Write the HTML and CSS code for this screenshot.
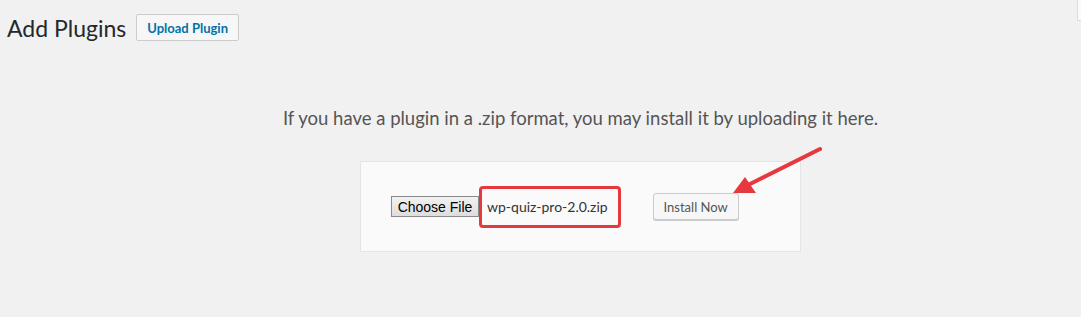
FILE: index.html
```html
<!DOCTYPE html>
<html lang="en">
<head>
<meta charset="UTF-8">
<title>Add Plugins</title>
<link rel="stylesheet" href="styles.css">
</head>
<body>

<div class="help-tab"></div>

<div class="wrap">
    <div class="title-row">
        <h1>Add Plugins</h1>
        <button class="page-title-action">Upload Plugin</button>
    </div>

    <div class="upload-plugin">
        <p class="install-help">If you have a plugin in a .zip format, you may install it by uploading it here.</p>
        <form class="upload-form">
            <button type="button" class="choose-btn">Choose File</button>
            <span class="file-name">wp-quiz-pro-2.0.zip</span>
            <button type="button" class="install-btn">Install Now</button>
        </form>
    </div>
</div>

<svg class="arrow" width="1081" height="317" viewBox="0 0 1081 317">
    <line x1="820" y1="149" x2="748" y2="185" stroke="#e8383f" stroke-width="4" stroke-linecap="round"/>
    <polygon points="733,193 745,177 756,193" fill="#e8383f"/>
</svg>

</body>
</html>
```

FILE: styles.css
```css
body { margin:0; background:#f1f1f1; font-family: Lato, "Open Sans", sans-serif; color:#23282d; }

.help-tab { position:absolute; top:0; right:0; width:3px; height:20px; background:#fafafa; border-left:1px solid #ddd; border-bottom:1px solid #ddd; }

.wrap { padding: 0 0 0 7px; }

.title-row { display:flex; align-items:center; padding-top:14px; }
.title-row h1 { margin:0; font-size:23px; font-weight:400; line-height:26px; }

.page-title-action {
    margin-left:10px;
    height:27px;
    padding:0 10px;
    background:#f7f7f7;
    border:1px solid #ccc;
    border-radius:2px;
    color:#0073aa;
    font-family: Lato, "Open Sans", sans-serif;
    font-size:13px;
    font-weight:700;
}

.upload-plugin { padding-left:73px; }
.install-help { margin:66px 0 0; text-align:center; font-size:18.5px; color:#555; line-height:22px; }

.upload-form {
    display:flex;
    align-items:center;
    width:409px;
    height:89px;
    margin:32px auto 0;
    padding:0 0 0 30px;
    background:#fafafa;
    border:1px solid #e5e5e5;
}

.choose-btn {
    width:88px;
    height:21px;
    padding:0;
    background:linear-gradient(#f2f2f2, #dddddd);
    border:1px solid #8a8a8a;
    border-radius:0;
    font-family:"Liberation Sans", Arial, sans-serif;
    font-size:14px;
    color:#000;
}

.file-name {
    display:flex;
    align-items:center;
    box-sizing:border-box;
    height:42px;
    padding:0 10px 0 5px;
    border:3px solid #e8383f;
    border-radius:4px;
    font-size:14px;
    color:#333;
}

.install-btn {
    margin-left:32px;
    width:86px;
    height:27px;
    padding:0;
    background:#f7f7f7;
    border:1px solid #ccc;
    border-radius:3px;
    box-shadow:0 1px 0 #ccc;
    font-family: Lato, "Open Sans", sans-serif;
    font-size:13px;
    color:#555;
}

.arrow { position:absolute; top:0; left:0; pointer-events:none; }
```
